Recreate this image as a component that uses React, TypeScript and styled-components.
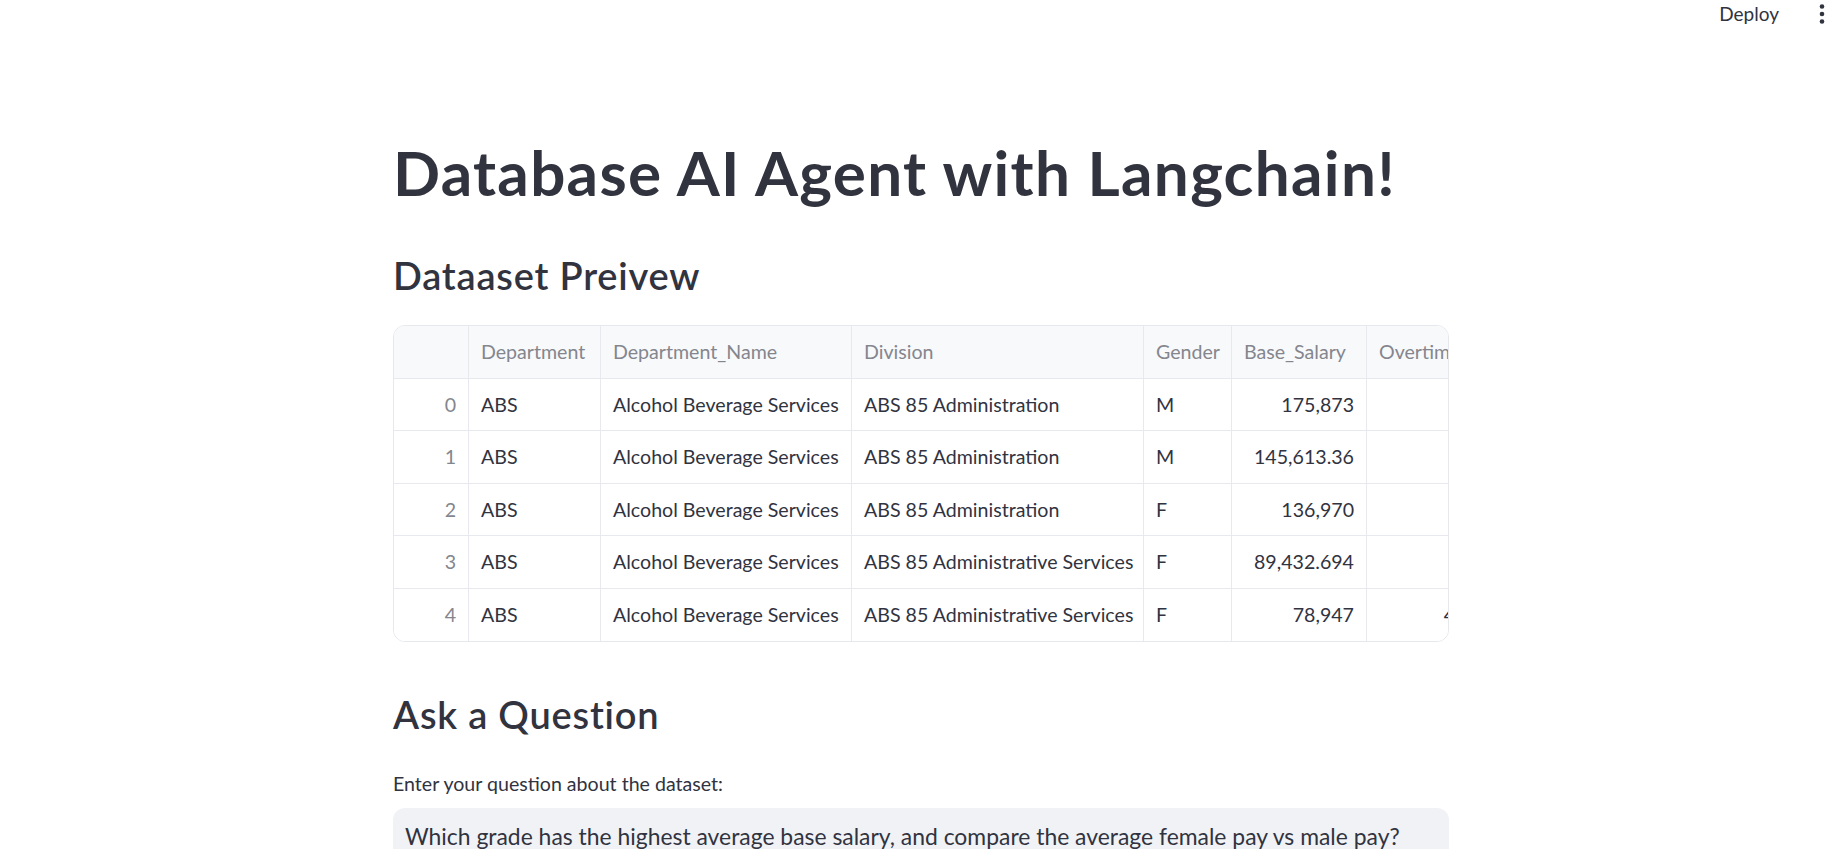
import React from "react";
import styled, { createGlobalStyle } from "styled-components";

const GlobalStyle = createGlobalStyle`
  html, body {
    margin: 0;
    padding: 0;
    background: #ffffff;
  }
  body {
    font-family: "Lato", "Liberation Sans", sans-serif;
    color: #31333f;
  }
  * { box-sizing: border-box; }
`;

const Page = styled.div`
  width: 100%;
  min-height: 849px;
  overflow: hidden;
`;

const Header = styled.header`
  height: 28px;
  display: flex;
  justify-content: flex-end;
  align-items: center;
  gap: 40px;
  padding-right: 17px;
`;

const DeployButton = styled.button`
  border: none;
  background: transparent;
  padding: 0;
  font-family: inherit;
  font-size: 19px;
  line-height: 28px;
  color: #31333f;
  cursor: pointer;
`;

const MenuDots = styled.svg`
  width: 6px;
  height: 26px;
  display: block;
`;

const Main = styled.main`
  width: 1056px;
  margin: 0 auto;
  padding-top: 108px;
`;

const Title = styled.h1`
  margin: 0;
  font-size: 62px;
  font-weight: 700;
  line-height: 72px;
  color: #31333f;
  letter-spacing: 1.3px;
`;

const SubHeader = styled.h3<{ $top: number }>`
  margin: ${(p) => p.$top}px 0 0;
  font-size: 38px;
  font-weight: 600;
  line-height: 44px;
  color: #31333f;
  letter-spacing: 0.8px;
`;

const TableFrame = styled.div`
  margin-top: 28px;
  width: 1056px;
  border: 1px solid #e6e8ee;
  border-radius: 12px;
  overflow: hidden;
`;

const Grid = styled.div<{ $cols: string }>`
  display: grid;
  grid-template-columns: ${(p) => p.$cols};
  grid-auto-rows: 52.5px;
  width: max-content;
`;

const Cell = styled.div<{ $head?: boolean; $right?: boolean; $muted?: boolean; $last?: boolean }>`
  display: flex;
  align-items: center;
  justify-content: ${(p) => (p.$right ? "flex-end" : "flex-start")};
  padding: 0 12px;
  font-size: 19.6px;
  white-space: nowrap;
  overflow: hidden;
  color: ${(p) => (p.$head || p.$muted ? "#84868e" : "#31333f")};
  background: ${(p) => (p.$head ? "#f8f9fb" : "#ffffff")};
  border-right: 1px solid #e8e9ee;
  border-bottom: ${(p) => (p.$last ? "none" : "1px solid #e8e9ee")};
`;

const Label = styled.label`
  display: block;
  margin-top: 35.5px;
  font-size: 19.6px;
  line-height: 24px;
  color: #31333f;
`;

const InputBox = styled.div`
  margin-top: 12px;
  height: 60px;
  background: #f0f2f6;
  border-radius: 12px;
  padding: 14px 12px;
  font-size: 22.9px;
  line-height: 28px;
  color: #31333f;
  white-space: nowrap;
`;

const columns = ["", "Department", "Department_Name", "Division", "Gender", "Base_Salary", "Overtime_Pay"];
const widths = [75, 132, 251, 292, 88, 135, 167];
const rightAligned = [true, false, false, false, false, true, true];

const rows: string[][] = [
  ["0", "ABS", "Alcohol Beverage Services", "ABS 85 Administration", "M", "175,873", "0"],
  ["1", "ABS", "Alcohol Beverage Services", "ABS 85 Administration", "M", "145,613.36", "0"],
  ["2", "ABS", "Alcohol Beverage Services", "ABS 85 Administration", "F", "136,970", "0"],
  ["3", "ABS", "Alcohol Beverage Services", "ABS 85 Administrative Services", "F", "89,432.694", "0"],
  ["4", "ABS", "Alcohol Beverage Services", "ABS 85 Administrative Services", "F", "78,947", "4,522.81"],
];

export default function App() {
  return (
    <Page>
      <GlobalStyle />
      <Header>
        <DeployButton>Deploy</DeployButton>
        <MenuDots viewBox="0 0 6 26">
          <circle cx="3" cy="5.5" r="2.3" fill="#31333f" />
          <circle cx="3" cy="13" r="2.3" fill="#31333f" />
          <circle cx="3" cy="20.5" r="2.3" fill="#31333f" />
        </MenuDots>
      </Header>
      <Main>
        <Title>Database AI Agent with Langchain!</Title>
        <SubHeader $top={45}>Dataaset Preivew</SubHeader>
        <TableFrame>
          <Grid $cols={widths.map((w) => `${w}px`).join(" ")}>
            {columns.map((c, i) => (
              <Cell key={`h${i}`} $head>
                {c}
              </Cell>
            ))}
            {rows.map((r, ri) =>
              r.map((v, ci) => (
                <Cell
                  key={`${ri}-${ci}`}
                  $right={rightAligned[ci]}
                  $muted={ci === 0}
                  $last={ri === rows.length - 1}
                >
                  {v}
                </Cell>
              ))
            )}
          </Grid>
        </TableFrame>
        <SubHeader $top={50}>Ask a Question</SubHeader>
        <Label>Enter your question about the dataset:</Label>
        <InputBox>Which grade has the highest average base salary, and compare the average female pay vs male pay?</InputBox>
      </Main>
    </Page>
  );
}
